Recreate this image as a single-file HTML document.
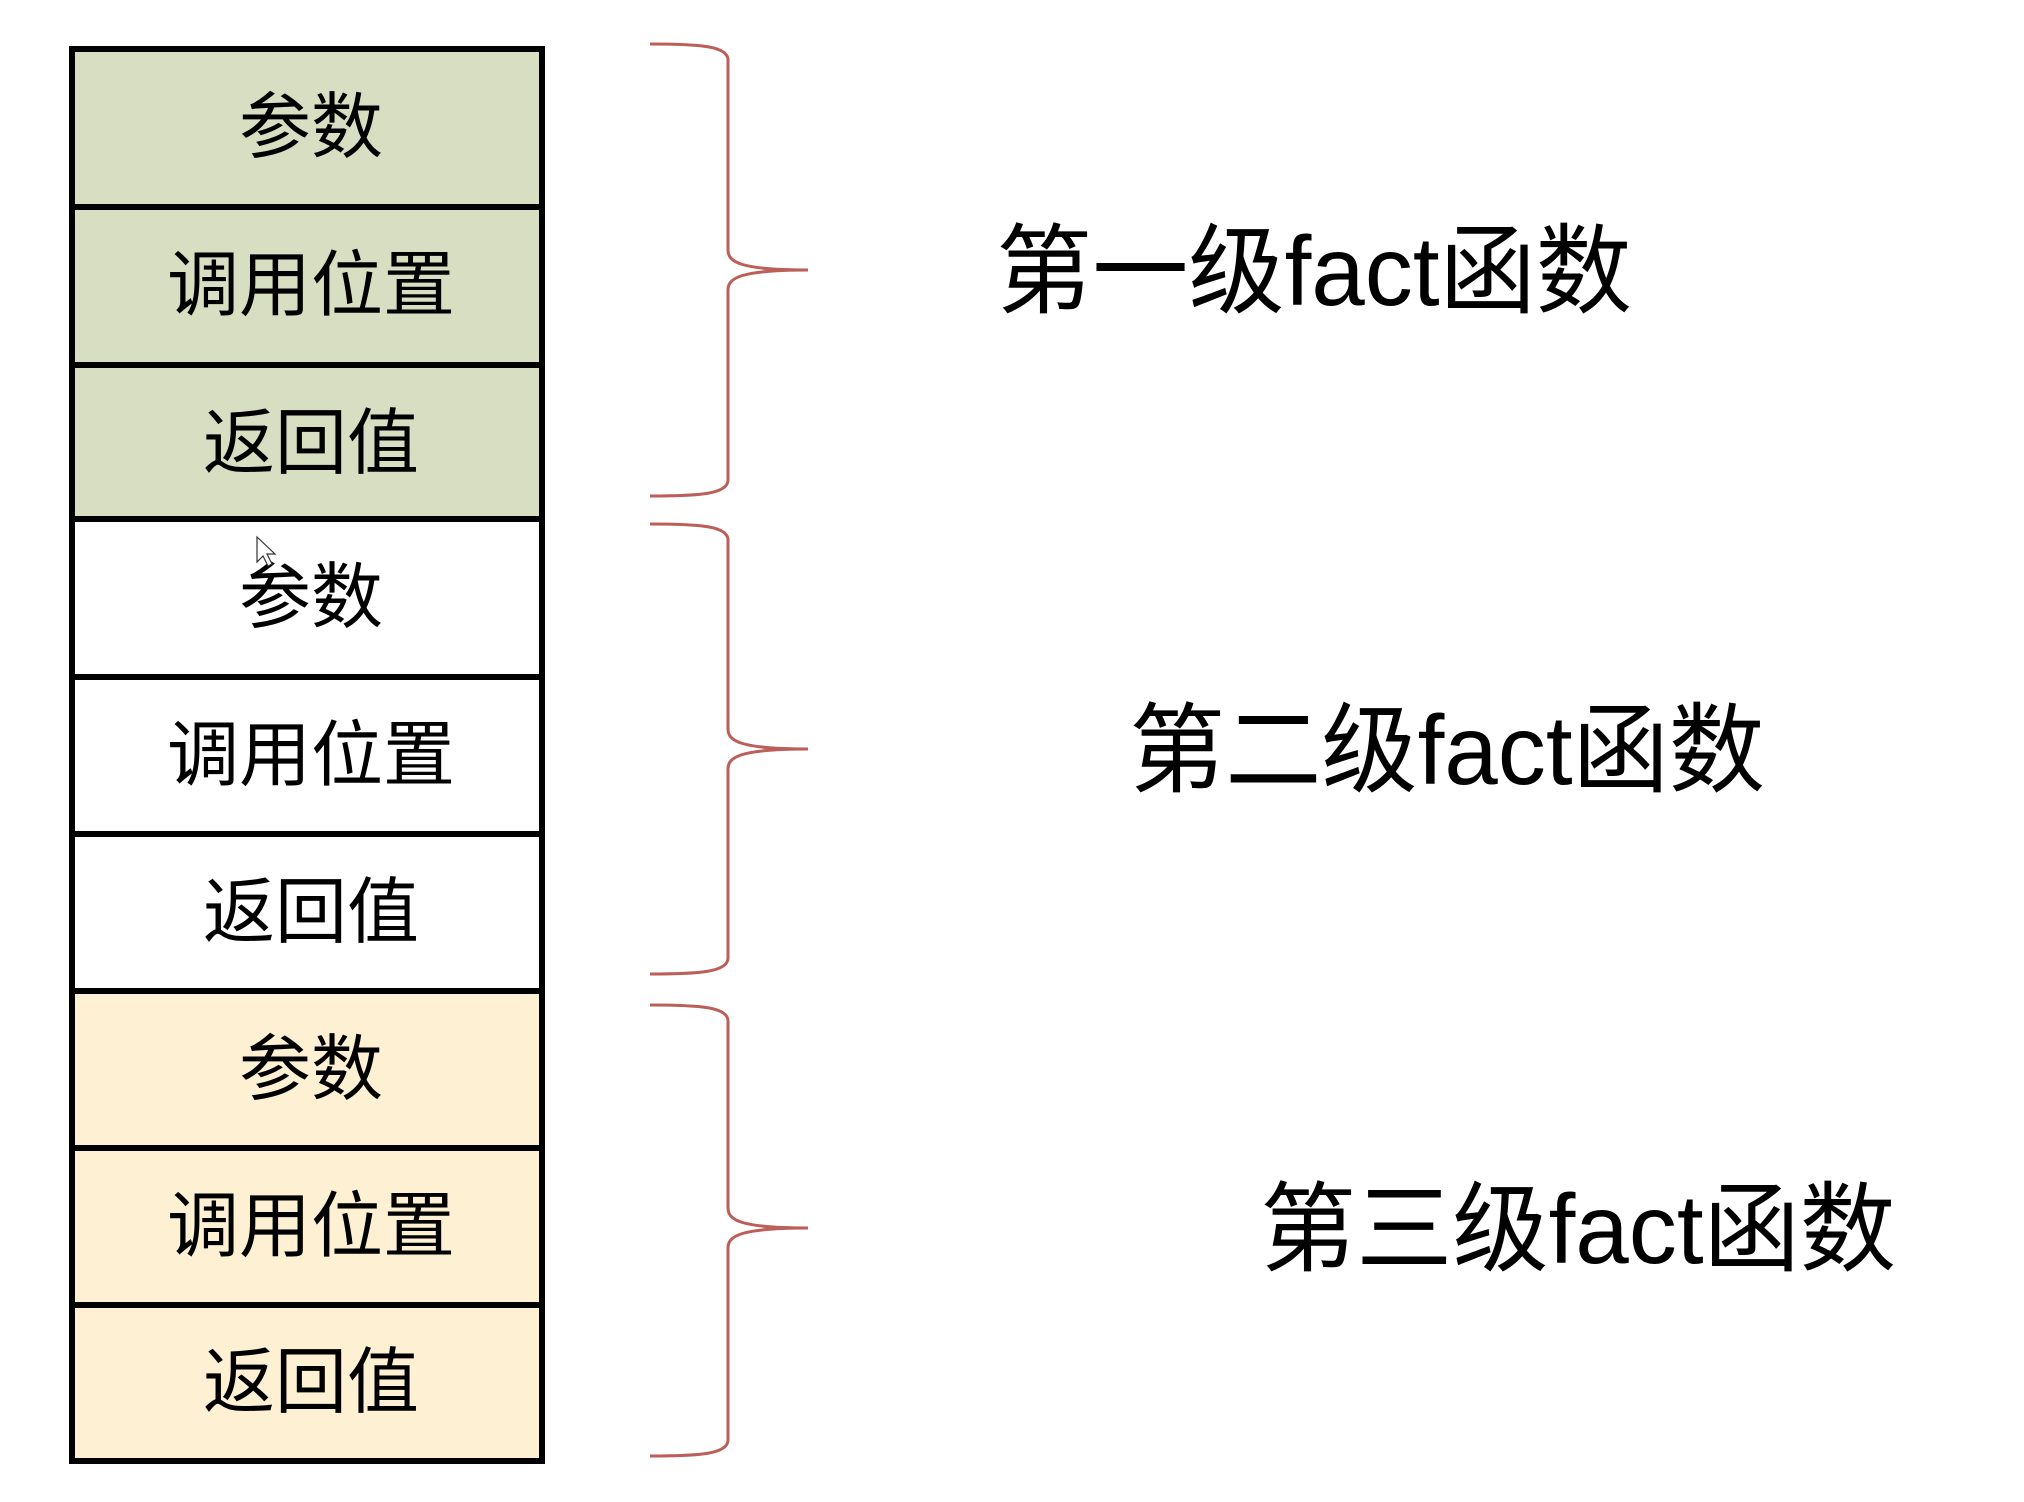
<!DOCTYPE html>
<html><head><meta charset="utf-8"><style>
html,body{margin:0;padding:0;background:#fff;width:2024px;height:1502px;overflow:hidden;position:relative}
.cell{position:absolute;left:69px;width:476px;box-sizing:border-box;border-left:6px solid #000;border-right:6px solid #000;border-top:6px solid #000;display:flex;align-items:center;justify-content:center;font-family:"Liberation Sans","Noto Sans CJK SC",sans-serif;font-size:72px;color:#000;line-height:1;padding-left:8px}
.g{background:#d8dec1}.w{background:#fff}.y{background:#fdf0d3}
.lab{position:absolute;font-family:"Liberation Sans","Noto Sans CJK SC",sans-serif;font-size:98px;line-height:1;color:#000;white-space:nowrap;transform-origin:0 50%}
</style></head><body>
<div class="cell g" style="top:46px;height:158px">参数</div>
<div class="cell g" style="top:204px;height:158px">调用位置</div>
<div class="cell g" style="top:362px;height:157px">返回值</div>
<div class="cell w" style="top:516px;height:158px">参数</div>
<div class="cell w" style="top:674px;height:157px">调用位置</div>
<div class="cell w" style="top:831px;height:157px">返回值</div>
<div class="cell y" style="top:988px;height:157px">参数</div>
<div class="cell y" style="top:1145px;height:157px">调用位置</div>
<div class="cell y" style="top:1302px;height:162px;border-bottom:6px solid #000">返回值</div>
<svg style="position:absolute;left:0;top:0" width="2024" height="1502">
<g fill="none" stroke="#bb5f58" stroke-width="3">
<path d="M650,44 C700,44 728,46 728,60 L728,250 C728,262 740,270 808,270 C740,270 728,278 728,290 L728,480 C728,494 700,496 650,496"/>
<path d="M650,524 C700,524 728,526 728,540 L728,729 C728,741 740,749 808,749 C740,749 728,757 728,769 L728,958 C728,972 700,974 650,974"/>
<path d="M650,1005 C700,1005 728,1007 728,1021 L728,1208 C728,1220 740,1228 808,1228 C740,1228 728,1236 728,1248 L728,1440 C728,1454 700,1456 650,1456"/>
</g>
<path d="M257,537 L257,562 L263,556 L268,566 L272,564 L267,554 L275,554 Z" fill="#fff" stroke="#333" stroke-width="1.2"/>
</svg>
<div class="lab" style="left:996px;top:222px">第一级fact函数</div>
<div class="lab" style="left:1129px;top:701px">第二级fact函数</div>
<div class="lab" style="left:1260px;top:1180px">第三级fact函数</div>
<script>
document.querySelectorAll('.lab').forEach(function(e){var w=e.getBoundingClientRect().width;e.style.transform='scaleX('+(636/w)+')';});
</script>
</body></html>
